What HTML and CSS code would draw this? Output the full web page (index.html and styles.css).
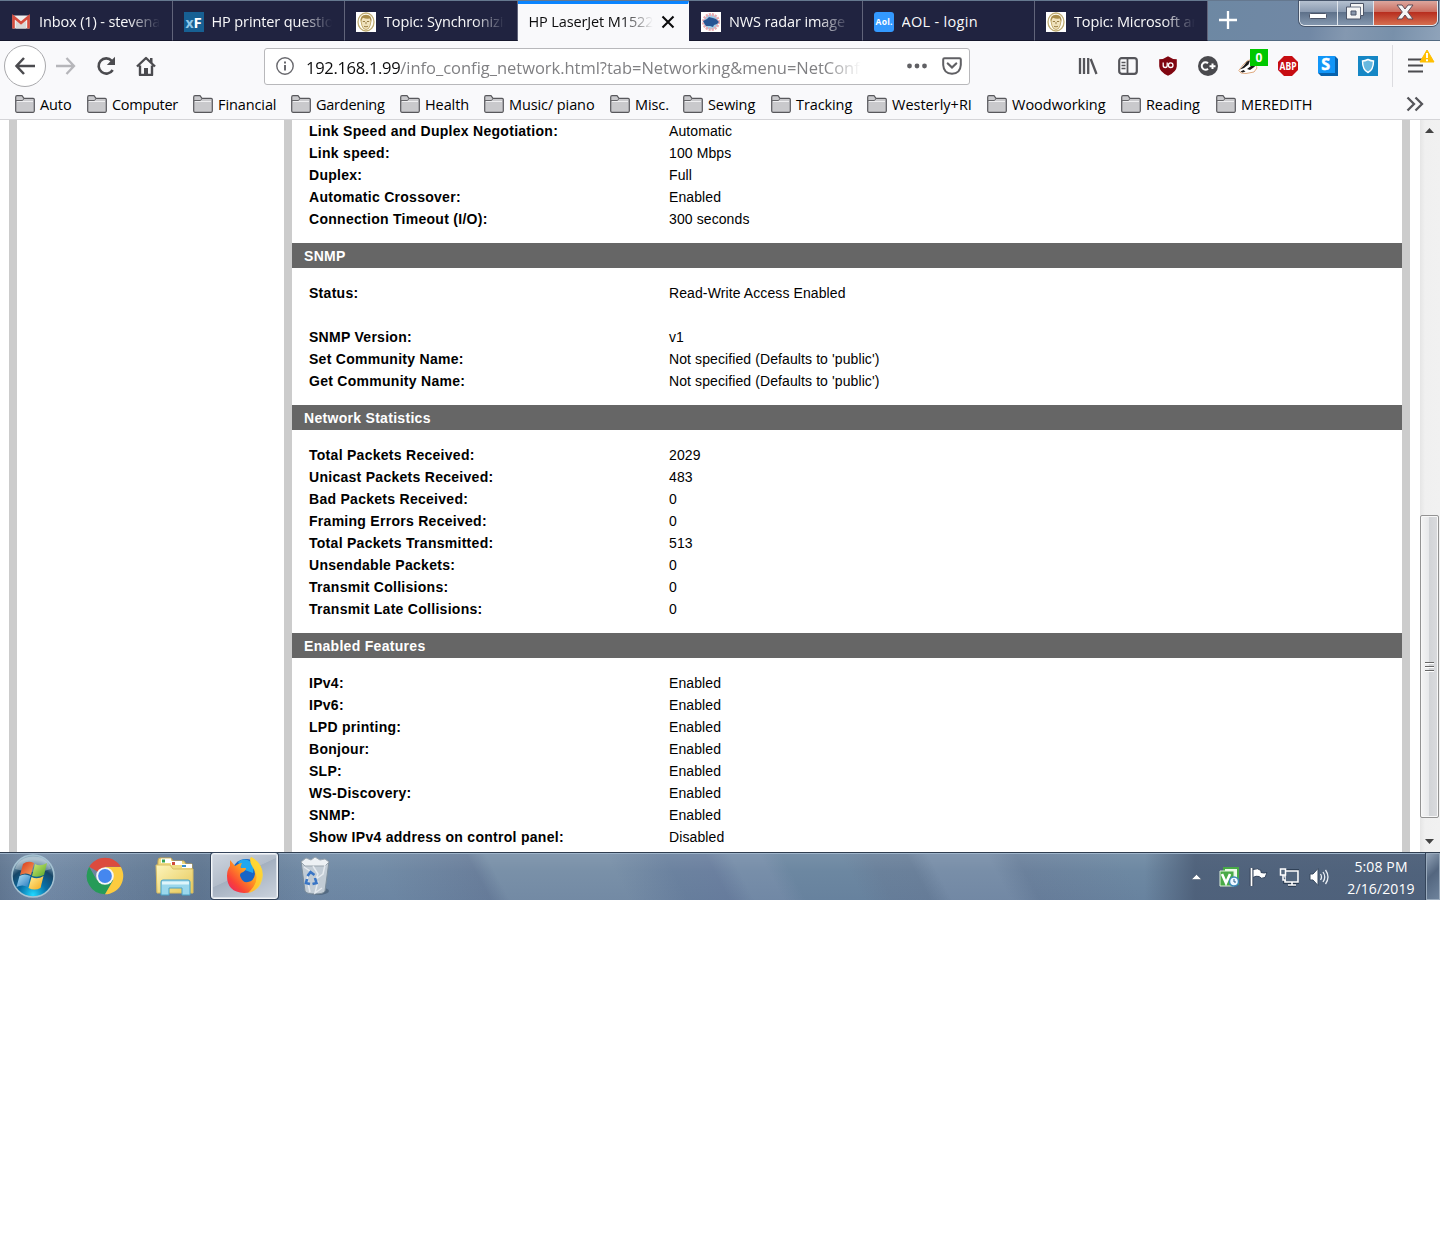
FILE: index.html
```
<!DOCTYPE html>
<html lang="en">
<head>
  <meta charset="UTF-8" />
  <title>HP LaserJet M1522n MFP</title>
  <link rel="stylesheet" href="styles.css">
</head>
<body>

<svg class="defs" width="0" height="0">
  <symbol id="folder" viewBox="0 0 20 18">
    <path d="M.7 2.2Q.7.7 2 .7h5l2 2.600h9.200q1.100 0 1.100 1.200v11.600q0 1.200-1.100 1.200H1.900Q.7 17.300.7 16.100z" fill="#c9c9cc" stroke="#58585c" stroke-width="1.200"/>
    <path d="M1 5.500h6.500L9 3.500" fill="none" stroke="#66666a"/>
    <path d="M2 6.500h16" stroke="#efeff1"/>
  </symbol>
  <symbol id="face" viewBox="0 0 20 20">
    <path fill="#fff" d="M0 0h20v20H0z"/>
    <ellipse cx="10" cy="10" rx="8" ry="9" fill="#fffdf4" stroke="#c0ad73" stroke-width="1.300"/>
    <path d="M5 9q0-5 5-5t5 5l-.9 4.500Q13 17.500 10 17.500T5.900 13.500z" fill="#f0e3bd" stroke="#b59b56" stroke-width=".8"/>
    <path d="M4.800 9.500Q3.800 3 10 2.800q6.200.2 5.200 6.700L13.800 6.500Q10 7 7 5.800L6 7z" fill="#a88b48"/>
    <path d="M6.800 9.500h2.200m2 0h2.200M10 10v2.200M8 14.300q2 1 4 0" fill="none" stroke="#8e7337" stroke-width=".9"/>
  </symbol>
</svg>

<div class="browser">
  <div class="tabbar">
    <div class="tab">
      <svg width="20" height="20" viewBox="0 0 20 20"><path fill="#eee" d="M1.500 3.500h17v13h-17z"/><path d="M5 9l5 4 5-4v7.500H5z" fill="#d9d7d7"/><path d="M2.500 16.500V4.800L10 11l7.500-6.200v11.700" fill="none" stroke="#d54b3d" stroke-width="2.600"/></svg>
      <span>Inbox (1) - stevena</span>
    </div>
    <div class="tab">
      <svg width="20" height="20" viewBox="0 0 20 20"><path fill="#176093" d="M0 0h20v20H0z"/><text x="1.500" y="15.500" font-size="14" font-weight="bold" fill="#8fc7e8">x</text><text x="9.500" y="15.500" font-size="15" font-weight="bold" fill="#fff">F</text></svg>
      <span>HP printer question</span>
    </div>
    <div class="tab">
      <svg width="20" height="20"><use href="#face"/></svg>
      <span>Topic: Synchronizing</span>
    </div>
    <div class="tab active">
      <span>HP LaserJet M1522n</span>
      <svg class="close" width="14" height="14" viewBox="0 0 14 14"><path d="M1.500 1.500l11 11m0-11l-11 11" stroke="#0c0c0d" stroke-width="2.100"/></svg>
    </div>
    <div class="tab">
      <svg width="20" height="20" viewBox="0 0 20 20"><path fill="#fff" d="M0 0h20v20H0z"/><circle cx="10" cy="10" r="7.500" fill="#9fd0ea" stroke="#eaa9af" stroke-width="3" stroke-dasharray="2 1"/><path d="M2 9l4-2 2-2 4 1 3 1 3 3-2 2-3 1-1 2-3-1-4 0-2-3z" fill="#275493"/></svg>
      <span>NWS radar image</span>
    </div>
    <div class="tab">
      <svg width="20" height="20" viewBox="0 0 20 20"><rect width="20" height="20" rx="3" fill="#3399ff"/><text x="1.500" y="13" font-size="8.500" font-weight="bold" fill="#fff" textLength="17">Aol.</text></svg>
      <span>AOL - login</span>
    </div>
    <div class="tab">
      <svg width="20" height="20"><use href="#face"/></svg>
      <span>Topic: Microsoft and</span>
    </div>
    <div class="titlebar">
      <svg class="plus" width="18" height="18" viewBox="0 0 18 18"><path d="M9 0v18M0 9h18" stroke="#fff" stroke-width="2.300"/></svg>
      <div class="window-buttons">
        <div class="win-btn"><svg width="20" height="20" viewBox="0 0 20 20"><rect x="1.500" y="11.500" width="17" height="5" rx="1" fill="#fff" stroke="#4c5568"/></svg></div>
        <div class="win-btn"><svg width="20" height="20" viewBox="0 0 20 20"><path d="M5.500 1.500h13v12h-3v3.500h-14v-12h4z" fill="#f5f5f5" stroke="#4c5568"/><path d="M15.500 13.500V5h-10" fill="none" stroke="#697386"/><path d="M6 9h5v4H6z" fill="#8997ac" stroke="#4c5568"/></svg></div>
        <div class="win-btn win-close"><svg width="20" height="18" viewBox="0 0 20 18"><path d="M2 2h5l3 4 3-4h5l-5.300 7L18 16h-5l-3-4-3 4H2l5.300-7z" fill="#f5f5f5" stroke="#5e4a55"/></svg></div>
      </div>
    </div>
  </div>

  <div class="navbar">
    <div class="back"><svg width="22" height="20" viewBox="0 0 22 20"><path d="M21 10H3M10 2L2.500 10 10 18" fill="none" stroke="#4b4b4f" stroke-width="2.500"/></svg></div>
    <svg class="forward" width="22" height="20" viewBox="0 0 22 20"><path d="M1 10h18M11.500 2L19 10l-7.500 8" fill="none" stroke="#b6b6ba" stroke-width="2.300"/></svg>
    <svg class="reload" width="20" height="20" viewBox="0 0 20 20"><path d="M15.800 4.800A7.600 7.600 0 1 0 16.700 14" fill="none" stroke="#4b4b4f" stroke-width="2.600"/><path d="M19 .8v8.200h-8.200z" fill="#4b4b4f"/></svg>
    <svg class="home" width="20" height="20" viewBox="0 0 20 20"><path d="M1 10.500L10 2l9 8.500M4 9.500V19h12V9.500" fill="none" stroke="#4b4b4f" stroke-width="2.400" stroke-linejoin="round"/><path d="M8 18v-6h4v6M14 2h2.500v5L14 5z" fill="#4b4b4f"/></svg>
    <div class="urlbar">
      <svg width="18" height="18" viewBox="0 0 18 18"><circle cx="9" cy="9" r="8.200" fill="none" stroke="#69696e" stroke-width="1.400"/><path d="M9 8v5.500M9 4.500v2" stroke="#69696e" stroke-width="2"/></svg>
      <div class="url"><b>192.168.1.99</b>/info_config_network.html?tab=Networking&amp;menu=NetConf</div>
      <svg class="dots" width="20" height="6" viewBox="0 0 20 6"><circle cx="2.500" cy="3" r="2.400"/><circle cx="10" cy="3" r="2.400"/><circle cx="17.500" cy="3" r="2.400"/></svg>
      <svg width="20" height="18" viewBox="0 0 20 18"><path d="M2.500 1.300h15q1.300 0 1.300 1.300V8Q18.300 16.500 10 16.700 1.700 16.500 1.200 8V2.600q0-1.300 1.300-1.300z" fill="none" stroke="#606064" stroke-width="2"/><path d="M5.800 6.500L10 10.500l4.200-4" fill="none" stroke="#606064" stroke-width="2.300" stroke-linecap="round"/></svg>
    </div>
    <div class="tools">
      <svg width="20" height="20" viewBox="0 0 20 20"><path d="M2 2v16M6 2v16M10.200 2v16M12.700 3l5.800 15" stroke="#55555a" stroke-width="2.300"/></svg>
      <svg width="20" height="20" viewBox="0 0 20 20"><rect x="1.200" y="2.200" width="17.600" height="15.600" rx="2.500" fill="none" stroke="#55555a" stroke-width="2.200"/><path d="M9.500 2v16" stroke="#55555a" stroke-width="1.800"/><path d="M3.500 6.500h4M3.500 9.500h4M3.500 12.500h4" stroke="#55555a" stroke-width="1.300"/></svg>
      <svg width="20" height="20" viewBox="0 0 20 20"><path d="M10 .3q4 3 8.800 3v7Q18.500 16 10 19.800 1.500 16 1.200 10.300v-7q4.800 0 8.800-3z" fill="#800610"/><path d="M5.200 6.500V9.500q0 2 2 2t2-2V6.500" fill="none" stroke="#fff" stroke-width="1.300"/><circle cx="12.700" cy="9.200" r="2.300" fill="none" stroke="#fff" stroke-width="1.300"/></svg>
      <svg width="20" height="20" viewBox="0 0 20 20"><circle cx="10" cy="10" r="10" fill="#4a4a4e"/><path d="M10 7.300A3.700 3.700 0 1 0 10 12.700M11.500 10.300h6M14.500 7.500v5.600" fill="none" stroke="#fff" stroke-width="2"/></svg>
      <div class="badger">
        <svg width="20" height="20" viewBox="0 0 20 20"><path d="M.8 14.500L5 9l4-4 5-2 3 5 2 4-3 4-8 1.500-5-.5z" fill="#fff" stroke="#e0ab80"/><path d="M2 13.500l4-4 3-4 3-1-1.500 4L6 12zM2.500 15.500l3-1.500 2 1.500-3 1zM9 13l6-4.500 2 2L12 14z" fill="#1c1a19"/></svg>
        <span>0</span>
      </div>
      <svg width="20" height="20" viewBox="0 0 20 20"><path d="M6 0h8l6 6v8l-6 6H6l-6-6V6z" fill="#c70d12"/><text x="1.500" y="14" font-size="11" font-weight="bold" fill="#fff" textLength="17" lengthAdjust="spacingAndGlyphs">ABP</text></svg>
      <svg width="20" height="20" viewBox="0 0 20 20"><path d="M0 0h17l3 3v17H3l-3-3z" fill="#0762ad"/><path d="M0 0h17v17H0z" fill="#1296f8"/><text x="3.200" y="14" font-size="16" font-weight="bold" fill="#fff" stroke="#fff" stroke-width=".5">S</text></svg>
      <svg width="20" height="20" viewBox="0 0 20 20"><path fill="#1687c5" d="M0 0h20v20H0z"/><path d="M10 3.500q3 1.500 5.500 1.500 0 9-5.500 11.500Q4.500 14 4.500 5 7 5 10 3.500z" fill="#68b8df" stroke="#fff" stroke-width="1.400"/></svg>
    </div>
    <div class="menu">
      <svg width="28" height="28" viewBox="0 0 28 28"><path d="M1 11.500h15M1 17.500h15M1 23.500h15" stroke="#4b4b4f" stroke-width="2.200"/><path d="M20 2l7 12h-14z" fill="#ffbf00" stroke="#ffbf00" stroke-linejoin="round"/><path d="M20 5v5M20 11.300v2" stroke="#fff" stroke-width="1.900"/></svg>
    </div>
  </div>

  <div class="bookmarks">
    <div class="bookmark"><svg><use href="#folder"/></svg><span>Auto</span></div>
    <div class="bookmark"><svg><use href="#folder"/></svg><span>Computer</span></div>
    <div class="bookmark"><svg><use href="#folder"/></svg><span>Financial</span></div>
    <div class="bookmark"><svg><use href="#folder"/></svg><span>Gardening</span></div>
    <div class="bookmark"><svg><use href="#folder"/></svg><span>Health</span></div>
    <div class="bookmark"><svg><use href="#folder"/></svg><span>Music/ piano</span></div>
    <div class="bookmark"><svg><use href="#folder"/></svg><span>Misc.</span></div>
    <div class="bookmark"><svg><use href="#folder"/></svg><span>Sewing</span></div>
    <div class="bookmark"><svg><use href="#folder"/></svg><span>Tracking</span></div>
    <div class="bookmark"><svg><use href="#folder"/></svg><span>Westerly+RI</span></div>
    <div class="bookmark"><svg><use href="#folder"/></svg><span>Woodworking</span></div>
    <div class="bookmark"><svg><use href="#folder"/></svg><span>Reading</span></div>
    <div class="bookmark"><svg><use href="#folder"/></svg><span>MEREDITH</span></div>
    <svg class="more" width="18" height="16" viewBox="0 0 18 16"><path d="M1.500 1.500L8 8l-6.500 6.500M9.500 1.500L16 8l-6.500 6.500" fill="none" stroke="#55555a" stroke-width="2.300"/></svg>
  </div>

  <div class="viewport">
    <div class="sidebar"></div>
    <main>
      <dl>
        <dt>Link Speed and Duplex Negotiation:</dt><dd>Automatic</dd>
        <dt>Link speed:</dt><dd>100 Mbps</dd>
        <dt>Duplex:</dt><dd>Full</dd>
        <dt>Automatic Crossover:</dt><dd>Enabled</dd>
        <dt>Connection Timeout (I/O):</dt><dd>300 seconds</dd>
      </dl>
      <h2>SNMP</h2>
      <dl>
        <dt>Status:</dt><dd>Read-Write Access Enabled</dd>
        <dt></dt><dd></dd>
        <dt>SNMP Version:</dt><dd>v1</dd>
        <dt>Set Community Name:</dt><dd>Not specified (Defaults to 'public')</dd>
        <dt>Get Community Name:</dt><dd>Not specified (Defaults to 'public')</dd>
      </dl>
      <h2>Network Statistics</h2>
      <dl>
        <dt>Total Packets Received:</dt><dd>2029</dd>
        <dt>Unicast Packets Received:</dt><dd>483</dd>
        <dt>Bad Packets Received:</dt><dd>0</dd>
        <dt>Framing Errors Received:</dt><dd>0</dd>
        <dt>Total Packets Transmitted:</dt><dd>513</dd>
        <dt>Unsendable Packets:</dt><dd>0</dd>
        <dt>Transmit Collisions:</dt><dd>0</dd>
        <dt>Transmit Late Collisions:</dt><dd>0</dd>
      </dl>
      <h2>Enabled Features</h2>
      <dl>
        <dt>IPv4:</dt><dd>Enabled</dd>
        <dt>IPv6:</dt><dd>Enabled</dd>
        <dt>LPD printing:</dt><dd>Enabled</dd>
        <dt>Bonjour:</dt><dd>Enabled</dd>
        <dt>SLP:</dt><dd>Enabled</dd>
        <dt>WS-Discovery:</dt><dd>Enabled</dd>
        <dt>SNMP:</dt><dd>Enabled</dd>
        <dt>Show IPv4 address on control panel:</dt><dd>Disabled</dd>
      </dl>
    </main>
    <div class="scrollbar">
      <svg width="9" height="5" viewBox="0 0 9 5"><path d="M0 5L4.500 0 9 5z" fill="#444"/></svg>
      <div class="thumb"><i></i><i></i><i></i></div>
      <svg width="9" height="5" viewBox="0 0 9 5"><path d="M0 0h9L4.500 5z" fill="#444"/></svg>
    </div>
  </div>
</div>

<div class="taskbar">
  <svg class="start" width="46" height="46" viewBox="0 0 46 46">
    <defs>
      <radialGradient id="orb" cx=".5" cy=".95" r=".85"><stop offset="0" stop-color="#22d8ff"/><stop offset=".4" stop-color="#086fa7"/><stop offset=".75" stop-color="#174667"/><stop offset="1" stop-color="#8ca9bc"/></radialGradient>
      <linearGradient id="red" x2="1" y2="1"><stop stop-color="#d93418"/><stop offset="1" stop-color="#f7a560"/></linearGradient>
      <linearGradient id="green" x2="1" y2="1"><stop stop-color="#d5ed75"/><stop offset="1" stop-color="#55a527"/></linearGradient>
      <linearGradient id="blue" x2="1" y2="1"><stop stop-color="#b3e1f5"/><stop offset="1" stop-color="#247ac0"/></linearGradient>
      <linearGradient id="yellow" x2="1" y2="1"><stop stop-color="#fff19a"/><stop offset="1" stop-color="#f2a71b"/></linearGradient>
    </defs>
    <circle cx="23" cy="23" r="21" fill="url(#orb)" stroke="#a5c2d2" stroke-width="1.500"/>
    <path d="M5 16Q9 4 23 3.500T41 16Q25 22 5 16z" fill="#fff" opacity=".3"/>
    <path d="M13 11q5-4 11-1l-3 12q-5-3-11 0z" fill="url(#red)"/>
    <path d="M25 11q5 3 12-1l-3 12q-6 3-12 1z" fill="url(#green)"/>
    <path d="M9.500 23q5-3 11 0l-3 11q-5-3-11 0z" fill="url(#blue)"/>
    <path d="M21.500 24q6 3 12-1l-3 12q-6 3-12 0z" fill="url(#yellow)"/>
  </svg>
  <svg class="chrome" width="38" height="38" viewBox="0 0 38 38">
    <path d="M19 19L3.200 9.800A18.300 18.300 0 0 1 34.800 9.800H19z" fill="#dc4b3e"/>
    <path d="M19 19l8 4.500L19 37.300A18.300 18.300 0 0 1 3.200 9.800L11 23.500z" fill="#269b58"/>
    <path d="M19 10h15.900A18.300 18.300 0 0 1 19 37.300L27 23.500z" fill="#fccb3f"/>
    <circle cx="19" cy="19" r="8.800" fill="#f6f6f6"/><circle cx="19" cy="19" r="6.900" fill="#4587ef"/>
  </svg>
  <svg class="explorer" width="40" height="40" viewBox="0 0 40 40">
    <defs><linearGradient id="paper" x2="1" y2="1"><stop stop-color="#fdf5bc"/><stop offset="1" stop-color="#e6c757"/></linearGradient></defs>
    <path d="M3 5q0-3 2-3h11l2 3h11l2 3h6v28H2z" fill="#efdc83" stroke="#caa951"/>
    <path d="M6 2.500h10V7H6zM16 5h11v4H16zM27 8h10v4H27z" fill="#fff"/>
    <path d="M7 3.500h3v3H7z" fill="#35a352"/><path d="M17 6h3v3h-3z" fill="#d14b3a"/><path d="M27 9h4v2h-4z" fill="#398dcc"/>
    <path d="M1 9h14l3 4h20v24H2z" fill="url(#paper)" stroke="#d9bd62"/>
    <path d="M6 39V26q0-2 2-2h25q2 0 2 2v13h-8v-7H14v7z" fill="#9ad7ec" stroke="#4ba1c5"/>
    <path d="M7 27h27" stroke="#dff5fb" stroke-width="3"/>
  </svg>
  <div class="running">
    <svg width="38" height="38" viewBox="0 0 38 38">
      <defs><linearGradient id="fox" x1="1" x2="0" y2="1"><stop stop-color="#ffed43"/><stop offset=".45" stop-color="#ff9a20"/><stop offset=".75" stop-color="#fa4337"/><stop offset="1" stop-color="#e51b73"/></linearGradient></defs>
      <circle cx="20" cy="16" r="14" fill="#1765c7"/>
      <path d="M12 5q8-6 16 3l-1 8-11-4z" fill="#21a8ef"/>
      <path d="M4 3l5 6q4-3 7-3-2 3-1 5h5q0 3-5 5-2 2 0 5 2 5 7 4 6-1 7-8 0-5-3-9-3-4-1-8 12 6 11 18-2 18-18 18Q1 35 1 19q0-6 3-10z" fill="url(#fox)"/>
      <path d="M25 0q12 7 12 18-1 15-15 18 14-13 5-25-4-6-2-11z" fill="#ffda34" opacity=".75"/>
    </svg>
  </div>
  <svg class="bin" width="34" height="40" viewBox="0 0 34 40">
    <ellipse cx="20" cy="35" rx="11" ry="4" fill="#34465a" opacity=".45"/>
    <path d="M3 5h28l-4 30q-1 3-10 3T7 35z" fill="#c2ccd5" stroke="#7c8d9b"/>
    <path d="M3 6l5-4 5 2 4-3 5 3 5-1 4 3-4 4H7z" fill="#edf1f4" stroke="#99a5af"/>
    <path d="M6 11l6 4-3 8 3 13M15 10l5 8-2 5 7-5 2-9M20 25l-3 12 7-5" fill="none" stroke="#edf1f5" stroke-width="1.500" opacity=".8"/>
    <path d="M9.500 20l3-4 4 3M17 22l1.500 5-4 1M12 28l-4-1 1-4" fill="none" stroke="#3975c5" stroke-width="2.600"/>
  </svg>
  <div class="tray">
    <svg class="arrow" width="11" height="6" viewBox="0 0 11 6"><path d="M.5 5.500l5-5 5 5z" fill="#fff" stroke="#414f62" stroke-width=".5"/></svg>
    <svg width="20" height="20" viewBox="0 0 20 20"><path d="M5 1h14v16H5z" fill="#eefaea" stroke="#48aa47" stroke-width="2"/><path d="M1 4h14v15H1z" fill="#49aa47" stroke="#dff2dc"/><path d="M3 7l4 9 4-9" fill="none" stroke="#fff" stroke-width="2.600"/><circle cx="15" cy="14.500" r="4.500" fill="#eff8ff" stroke="#3b87b9" stroke-width="1.500"/><path d="M15 12v3h2" fill="none" stroke="#285d8a"/></svg>
    <svg width="20" height="20" viewBox="0 0 20 20"><path d="M2.500 1v18" stroke="#29364a" stroke-width="3.500"/><path d="M4 2.500q5-2 8 1v2q3 1 6 0l-2 5q-4 2-6-1-3-1-6 1z" fill="#fff" stroke="#34445c"/><path d="M2.500 1v18" stroke="#fff" stroke-width="1.800"/></svg>
    <svg width="20" height="20" viewBox="0 0 20 20"><path d="M6 4h13v11H6zM9 18h8M13 15v3" fill="#4d6078" stroke="#26374b" stroke-width="3.500"/><path d="M6 4h13v11H6zM9 18h8M13 15v3" fill="#53667d" stroke="#fff" stroke-width="1.600"/><path d="M1.500 2h5v6h-5zM4 8v5h3" fill="#596b80" stroke="#fff" stroke-width="1.500"/></svg>
    <svg width="20" height="20" viewBox="0 0 20 20"><path d="M1 7h3l5-5.500v17L4 13H1z" fill="#fff" stroke="#394b61"/><path d="M11.500 7q2 3 0 6M14 5q3.500 5 0 10M16.500 3q5 7 0 14" fill="none" stroke="#e9eef4" stroke-width="1.300"/></svg>
    <div class="clock"><span>5:08 PM</span><span>2/16/2019</span></div>
    <div class="show-desktop"></div>
  </div>
</div>

</body>
</html>
```
FILE: styles.css
```
* { box-sizing: border-box; }
body {
  margin: 0; background: #fff; color: #000;
  font-family: "Open Sans", "Noto Sans", sans-serif;
}
svg { display: block; flex: none; }
.defs { position: absolute; }
.browser { height: 852px; display: flex; flex-direction: column; }

/* tabs */
.tabbar {
  height: 41px; display: flex; background: #202340;
  border-top: 1px solid #65788f;
}
.tab {
  width: 172.5px; flex: none; display: flex; align-items: center;
  padding: 2px 12px 0 11px; gap: 8px; color: #f9f9fa;
  border-right: 1px solid #61647a; border-bottom: 1px solid #15172c;
}
.tab span {
  flex: 1; overflow: hidden; white-space: nowrap;
  font-size: 14.5px; letter-spacing: -0.12px; line-height: 24px;
  -webkit-mask-image: linear-gradient(to right, #000 calc(100% - 32px), transparent);
  mask-image: linear-gradient(to right, #000 calc(100% - 32px), transparent);
}
.tab:nth-child(6) span { mask-image: none; -webkit-mask-image: none; letter-spacing: 0.3px; }
.tab.active {
  background: #f9f9fb; color: #0c0c0d; border-color: #f9f9fb;
  border-top: 3px solid #0a84ff; padding-top: 0; padding-bottom: 1px;
  width: 171.5px; margin-right: 1px; box-shadow: 1px 0 #202340;
}
.tab.active .close { margin-right: 1px; }
.titlebar {
  flex: 1; display: flex; justify-content: space-between;
  background: linear-gradient(100deg, #6d88a3, #7188a5 45%, #8498b0 60%, #7890aa 80%, #8fa3ba);
  border-bottom: 1px solid #526a82;
}
.plus { margin: 10px 0 0 11px; }
.window-buttons {
  display: flex; width: 139px; height: 25px; margin-right: 2px;
  border: 1px solid #e4e9ef; border-top: none; border-radius: 0 0 6px 6px;
  overflow: hidden; box-shadow: 0 0 0 1px #46546a;
}
.win-btn {
  width: 38px; display: flex; align-items: center; justify-content: center;
  background: linear-gradient(#b5c1d0, #8b9bb1 45%, #5d7089 46%, #8497ae);
  border-right: 1px solid #e0e5ec;
}
.win-btn:nth-child(2) { width: 36px; }
.win-btn svg { margin: -2px 2px 0 0; }
.win-close {
  flex: 1; border: none;
  background: linear-gradient(#dda69d, #ca6d5f 45%, #b72c1d 46%, #d56f50);
}

/* toolbar */
.navbar {
  height: 51px; padding-bottom: 1px; display: flex; align-items: center; background: #f9f9fb;
}
.back {
  width: 42px; height: 42px; margin-left: 4px; border-radius: 50%;
  border: 1px solid #a9a9ac; background: #fff;
  display: flex; align-items: center; justify-content: center;
}
.forward { margin-left: 9px; }
.reload { margin-left: 19px; }
.home { margin-left: 20px; }
.urlbar {
  width: 706px; height: 37px; margin-left: 108px; padding: 0 7px 0 11px;
  display: flex; align-items: center;
  background: #fff; border: 1px solid #b8b8bb; border-radius: 3px;
}
.url {
  width: 556px; margin: 3px 46px 0 12px; overflow: hidden; white-space: nowrap;
  font-size: 16.5px; letter-spacing: -0.02px; line-height: 28px; color: #808083;
  -webkit-mask-image: linear-gradient(to right, #000 calc(100% - 36px), transparent);
  mask-image: linear-gradient(to right, #000 calc(100% - 36px), transparent);
}
.url b { color: #0c0c0d; font-weight: normal; letter-spacing: -0.3px; }
.dots { fill: #606064; margin-right: 15px; }
.tools { display: flex; gap: 20px; margin-left: 108px; }
.badger { position: relative; }
.badger span {
  position: absolute; left: 12px; top: -7px; width: 18px; height: 17px;
  background: #00c800; color: #fff; font-size: 12px; font-weight: bold;
  line-height: 17px; text-align: center;
}
.menu {
  height: 42px; margin-left: 14px; padding: 3px 0 0 14px;
  border-left: 1px solid #dcdce0;
}

/* bookmarks */
.bookmarks {
  height: 28px; padding: 0 0 3px 15px; display: flex; align-items: center;
  background: #f9f9fb; border-bottom: 1px solid #d5d5d8;
}
.bookmark { display: flex; align-items: center; gap: 5px; flex: none; }
.bookmark svg { width: 20px; height: 18px; }
.bookmark span {
  margin-top: 1px; font-size: 14.5px; letter-spacing: -0.1px; line-height: 22px; white-space: nowrap;
}
.bookmark:nth-child(1) { width: 72px; }
.bookmark:nth-child(2) { width: 106px; }
.bookmark:nth-child(2) span { letter-spacing: -0.3px; }
.bookmark:nth-child(3) { width: 98px; }
.bookmark:nth-child(4) { width: 109px; }
.bookmark:nth-child(4) span { letter-spacing: -0.25px; }
.bookmark:nth-child(5) { width: 84px; }
.bookmark:nth-child(6) { width: 126px; }
.bookmark:nth-child(7) { width: 73px; }
.bookmark:nth-child(8) { width: 88px; }
.bookmark:nth-child(9) { width: 96px; }
.bookmark:nth-child(10) { width: 120px; }
.bookmark:nth-child(10) span { letter-spacing: 0; }
.bookmark:nth-child(11) { width: 134px; }
.bookmark:nth-child(11) span { letter-spacing: 0; }
.bookmark:nth-child(12) { width: 95px; }
.bookmark:nth-child(13) span { letter-spacing: 0; }
.more { margin: 0 16px 0 auto; }

/* printer page */
.viewport { flex: 1; min-height: 0; display: flex; overflow: hidden; padding-left: 9px; }
.sidebar { width: 275px; border-left: 8px solid #ccc; }
main {
  width: 1126px; border: solid #ccc; border-width: 0 8px;
  font-family: "Liberation Sans", Arial, sans-serif; font-size: 14px;
}
dl {
  margin: 0; padding-left: 17px;
  display: grid; grid-template-columns: 360px 1fr; grid-auto-rows: 22px;
  line-height: 22px;
}
dt { font-weight: bold; letter-spacing: 0.28px; }
dd { margin: 0; letter-spacing: 0.1px; }
h2 {
  margin: 13px 0 14px; padding-left: 12px; height: 25px; line-height: 26px;
  background: #666; color: #fff; font-size: 14px; letter-spacing: 0.3px;
}
.scrollbar {
  width: 20px; margin-left: 10px; padding: 8px 2px 8px 0;
  display: flex; flex-direction: column; align-items: center;
  background: linear-gradient(to right, #e5e5e5, #f0f0f0 25%, #f1f1f1);
}
.thumb {
  width: 19px; height: 303px; margin: 382px -1px auto 0;
  border: 1px solid #939393; border-radius: 2px;
  background: linear-gradient(to right, #f5f5f5, #e8e9eb 45%, #d2d4d7 50%, #dadbde);
  box-shadow: inset 0 0 0 1px #f8f8f8;
  display: flex; flex-direction: column; align-items: center; justify-content: center; gap: 2px;
}
.thumb i { width: 9px; height: 2px; background: #666; border-bottom: 1px solid #fff; }

/* windows taskbar */
.taskbar {
  height: 48px; display: flex; align-items: center; padding: 0 0 1px 10px;
  border-top: 1px solid #303e50; box-shadow: inset 0 1px #9eb4ca;
  background:
    linear-gradient(to right, #384a614d, transparent 3%, #384a6133 10%, #384a614d 14%, transparent 22%, transparent 79.5%, #43526bb0 83%, #43526bb0),
    linear-gradient(#ffffff14, transparent 40%, #38508018),
    linear-gradient(62deg, #768da8 0, #718ba6 27%, #6a7f9b 33.5%, #7990a8 34.8%, #7990a8 43%, #6b829f 47%, #6b809f 49.8%, #778ea9 51.5%, #778ea9 53.5%, #6c87a1 55%, #6c87a1 59%, #6a819b 61%, #6a809a 63.5%, #788ea8 65%, #788ea8 69%, #6b819c 71%, #6d88a2 78%);
}
.chrome { margin-left: 30px; }
.explorer { margin-left: 31px; }
.running {
  width: 67px; height: 46px; margin-left: 16px;
  display: flex; align-items: center; justify-content: center;
  border: 1px solid #f3f6f9; border-radius: 3px;
  background: linear-gradient(155deg, #ced5df, #b3bdca 45%, #a4b0c0 46%, #cbd3dd);
  box-shadow: inset 0 0 0 1px #d9dfe7, 0 0 0 1px #35445a;
}
.bin { margin-left: 20px; }
.tray { margin-left: auto; height: 47px; display: flex; align-items: center; gap: 10px; }
.tray svg { margin-top: 2px; }
.arrow { margin-right: 7px; }
.clock {
  width: 82px; margin: 3px 0 0 -1px; padding-left: 4px;
  display: flex; flex-direction: column; align-items: center;
  color: #fff; font-size: 14px; letter-spacing: 0.12px; line-height: 22px;
}
.show-desktop {
  width: 14px; height: 47px; margin-left: -4px;
  border: 1px solid #9aabbd; box-shadow: -1px 0 #34445a;
  background: linear-gradient(135deg, #91a2b6, #53667f 45%, #6e839c);
}
```
